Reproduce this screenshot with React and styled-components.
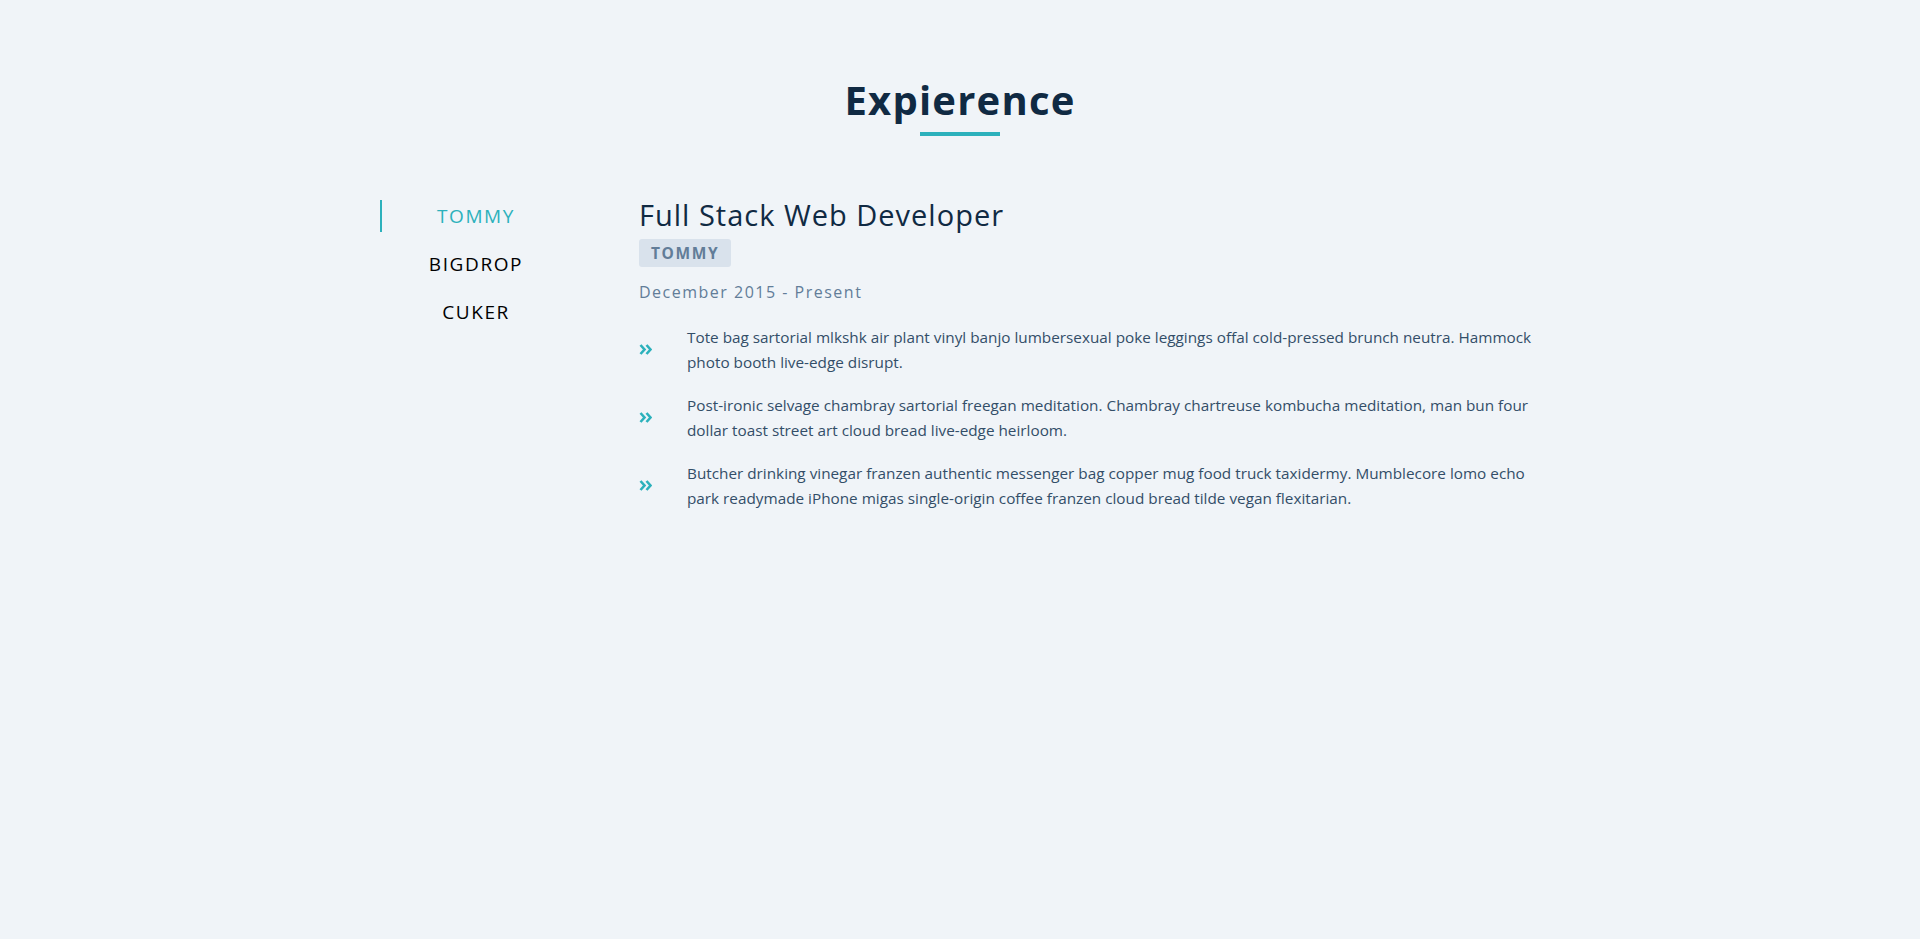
import React, { useState } from 'react';
import styled, { createGlobalStyle } from 'styled-components';

const GlobalStyle = createGlobalStyle`
  html, body {
    margin: 0;
    padding: 0;
    background: #F0F4F8;
  }
  body {
    font-family: "Open Sans", "Noto Sans", sans-serif;
  }
`;

const Section = styled.section`
  display: flex;
  flex-direction: column;
  align-items: center;
  min-height: 100vh;
  padding-top: 74px;
  box-sizing: border-box;
  background: #F0F4F8;
`;

const Heading = styled.h2`
  margin: 0;
  display: flex;
  flex-direction: column;
  align-items: center;
  color: #102A43;
  font-size: 40px;
  font-weight: 700;
  letter-spacing: 1.2px;
  line-height: 52px;

  &::after {
    content: "";
    display: block;
    width: 80px;
    height: 4px;
    margin-top: 6px;
    background: #2CB1BC;
  }
`;

const Body = styled.div`
  display: flex;
  flex-direction: row;
  width: 1160px;
  margin-top: 64px;
  gap: 69px;
`;

const TabList = styled.div`
  display: flex;
  flex-direction: column;
  gap: 16px;
  width: 190px;
  flex-shrink: 0;
`;

const TabBtn = styled.button`
  display: flex;
  align-items: center;
  justify-content: center;
  height: 32px;
  padding: 0;
  border: none;
  border-left: 2px solid ${(p) => (p.$active ? '#2CB1BC' : 'transparent')};
  background: transparent;
  color: ${(p) => (p.$active ? '#2CB1BC' : '#000000')};
  font-family: "Open Sans", sans-serif;
  font-size: 19px;
  letter-spacing: 1.6px;
  text-transform: uppercase;
  cursor: pointer;
`;

const Job = styled.article`
  display: flex;
  flex-direction: column;
  flex: 1;
`;

const JobTitle = styled.h3`
  margin: 0;
  color: #102A43;
  font-size: 29px;
  font-weight: 400;
  letter-spacing: 1px;
  line-height: 30px;
`;

const Badge = styled.span`
  align-self: flex-start;
  margin-top: 9px;
  padding: 0 12px;
  height: 28px;
  display: flex;
  align-items: center;
  border-radius: 3px;
  background: #D9E2EC;
  color: #627D98;
  font-size: 15.5px;
  font-weight: 700;
  letter-spacing: 1.6px;
  text-transform: uppercase;
`;

const Dates = styled.p`
  margin: 14px 0 0;
  color: #627D98;
  font-size: 16px;
  letter-spacing: 1.5px;
`;

const Duties = styled.ul`
  list-style: none;
  margin: 22px 0 0;
  padding: 0;
  display: flex;
  flex-direction: column;
  gap: 19px;
`;

const Duty = styled.li`
  display: grid;
  grid-template-columns: 48px 1fr;
  align-items: center;
`;

const DutyText = styled.p`
  margin: 0;
  color: #334E68;
  font-size: 15.3px;
  line-height: 24.5px;
`;

const Chevrons = () => (
  <svg width="13" height="11" viewBox="0 0 13 11" fill="none" stroke="#2CB1BC" strokeWidth="2.6">
    <path d="M1.5 1 L5.5 5.5 L1.5 10" />
    <path d="M7.5 1 L11.5 5.5 L7.5 10" />
  </svg>
);

const jobs = {
  tommy: {
    title: 'Full Stack Web Developer',
    company: 'Tommy',
    dates: 'December 2015 - Present',
    duties: [
      'Tote bag sartorial mlkshk air plant vinyl banjo lumbersexual poke leggings offal cold-pressed brunch neutra. Hammock photo booth live-edge disrupt.',
      'Post-ironic selvage chambray sartorial freegan meditation. Chambray chartreuse kombucha meditation, man bun four dollar toast street art cloud bread live-edge heirloom.',
      'Butcher drinking vinegar franzen authentic messenger bag copper mug food truck taxidermy. Mumblecore lomo echo park readymade iPhone migas single-origin coffee franzen cloud bread tilde vegan flexitarian.',
    ],
  },
  bigdrop: {
    title: 'Front End Developer',
    company: 'Bigdrop',
    dates: 'May 2014 - November 2015',
    duties: [
      'Post-ironic selvage chambray sartorial freegan meditation. Chambray chartreuse kombucha meditation, man bun four dollar toast street art cloud bread live-edge heirloom.',
    ],
  },
  cuker: {
    title: 'Junior Developer',
    company: 'Cuker',
    dates: 'June 2012 - April 2014',
    duties: [
      'Butcher drinking vinegar franzen authentic messenger bag copper mug food truck taxidermy.',
    ],
  },
};

function App() {
  const [active, setActive] = useState('tommy');
  const job = jobs[active];

  return (
    <>
      <GlobalStyle />
      <Section>
        <Heading>Expierence</Heading>
        <Body>
          <TabList>
            {Object.keys(jobs).map((key) => (
              <TabBtn key={key} $active={key === active} onClick={() => setActive(key)}>
                {key}
              </TabBtn>
            ))}
          </TabList>
          <Job>
            <JobTitle>{job.title}</JobTitle>
            <Badge>{job.company}</Badge>
            <Dates>{job.dates}</Dates>
            <Duties>
              {job.duties.map((d, i) => (
                <Duty key={i}>
                  <Chevrons />
                  <DutyText>{d}</DutyText>
                </Duty>
              ))}
            </Duties>
          </Job>
        </Body>
      </Section>
    </>
  );
}

export default App;
